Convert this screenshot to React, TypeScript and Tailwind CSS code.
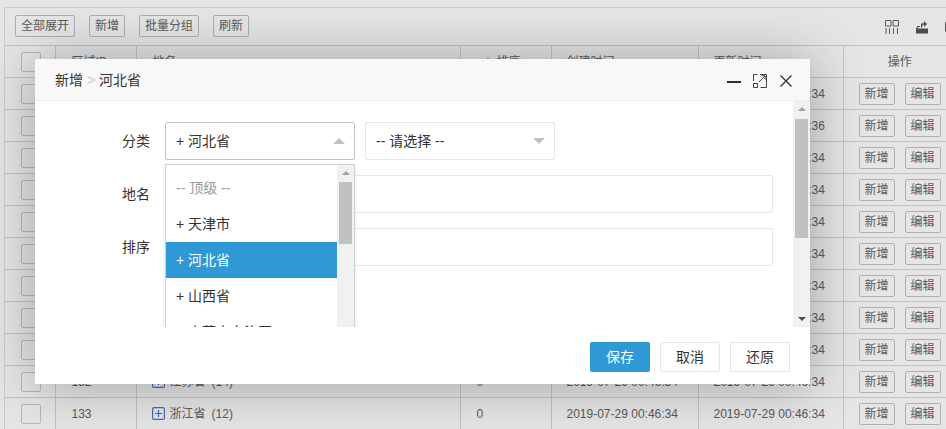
import React from "react";

const FONT = { fontFamily: '"Liberation Sans", "Noto Sans CJK SC", sans-serif' };

const rows = [
  ["110", "北京市", 16, "34"],
  ["120", "天津市", 16, "36"],
  ["130", "河北省", 11, "34"],
  ["140", "山西省", 11, "34"],
  ["150", "内蒙古自治区", 12, "34"],
  ["128", "辽宁省", 14, "34"],
  ["129", "吉林省", 9, "34"],
  ["130", "黑龙江省", 13, "34"],
  ["131", "上海市", 16, "34"],
  ["132", "江苏省", 14, "34"],
  ["133", "浙江省", 12, "34"],
] as const;

function SmallBtn({ children }: { children: React.ReactNode }) {
  return (
    <button className="flex h-[22px] items-center justify-center rounded-[2px] border border-[#c2c2c2] px-[5px] text-xs leading-none text-[#666]">
      {children}
    </button>
  );
}

function Check() {
  return <span className="block size-5 rounded-[2px] border border-[#ccc]" />;
}

function Tri({ up, cls }: { up?: boolean; cls: string }) {
  return (
    <svg viewBox="0 0 12 6" className={cls}>
      <path d={up ? "M6 0L12 6H0Z" : "M0 0H12L6 6Z"} fill="currentColor" />
    </svg>
  );
}

function Scrollbar({ thumbTop, thumbH, w, arrowDown }: { thumbTop: string; thumbH: string; w: string; arrowDown?: boolean }) {
  return (
    <div className={`relative h-full shrink-0 bg-[#f1f1f1] ${w}`}>
      <Tri up cls="absolute left-1/2 top-[6px] h-1 w-2 -translate-x-1/2 text-[#a3a3a3]" />
      <div className={`absolute left-[2px] right-[2px] bg-[#c1c1c1] ${thumbTop} ${thumbH}`} />
      {arrowDown && <Tri cls="absolute bottom-[6px] left-1/2 h-1 w-2 -translate-x-1/2 text-[#505050]" />}
    </div>
  );
}

export default function App() {
  return (
    <div className="relative h-[429px] w-[946px] overflow-hidden bg-white" style={FONT}>
      {/* Page behind the dialog */}
      <div className="ml-1 mt-[7px] w-[974px] border border-[#e2e2e2]">
        <div className="flex h-[37px] items-center gap-[14px] px-[10px] pb-[1px]">
          <SmallBtn>全部展开</SmallBtn>
          <SmallBtn>新增</SmallBtn>
          <SmallBtn>批量分组</SmallBtn>
          <SmallBtn>刷新</SmallBtn>
          <div className="ml-auto mr-2 mt-[2px] flex items-center gap-[16px] text-[#666]">
            <svg viewBox="0 0 14 14" className="size-[14px]" fill="none" stroke="currentColor">
              <path d="M.5.500h5.500v5.500h-5.500zM8 .500h5.500v5.500H8zM1 8v6M4.500 8v6M8.500 8v6M12.500 8v6" />
            </svg>
            <svg viewBox="0 0 14 14" className="size-[14px]" fill="#555">
              <path d="M1 8.500h12v5H1zM1 8.500l1.500-2.500h2.500v1H3.200L2.500 8.500zM6 7.500V4.800c0-1 .7-1.600 1.600-1.600H9V1l3 3-3 3V4.700H7.800c-.3 0-.5.200-.5.500v2.300z" />
            </svg>
            <svg viewBox="0 0 14 14" className="size-[14px]" fill="none" stroke="currentColor">
              <path d="M.5 2.500h8v9h-8z" />
            </svg>
          </div>
        </div>
        <table className="w-full table-fixed border-collapse text-xs text-[#666]">
          <colgroup>
            <col className="w-[50px]" />
            <col className="w-[81px]" />
            <col className="w-[324px]" />
            <col className="w-[91px]" />
            <col className="w-[147px]" />
            <col className="w-[145px]" />
            <col />
          </colgroup>
          <thead>
            <tr className="h-[32px] border-y border-[#d8d8d8] text-left font-normal">
              <th className="border-r border-[#d8d8d8] pl-[16px] font-normal"><Check /></th>
              <th className="border-r border-[#d8d8d8] pl-[16px] font-normal">区域ID</th>
              <th className="border-r border-[#d8d8d8] pl-[16px] font-normal">地名</th>
              <th className="border-r border-[#d8d8d8] pl-[24px] font-normal">
                <span className="flex items-center">
                  <span className="mr-[6px] block h-[6px] w-[6px] rotate-45 bg-[#e66]" />
                  排序
                  <Tri up cls="ml-[12px] h-[6px] w-[9px] text-[#aaa]" />
                </span>
              </th>
              <th className="border-r border-[#d8d8d8] pl-[15px] font-normal">创建时间</th>
              <th className="border-r border-[#d8d8d8] pl-[15px] font-normal">更新时间</th>
              <th className="pr-[21px] text-center font-normal">操作</th>
            </tr>
          </thead>
          <tbody>
            {rows.map(([id, name, n, end], i) => (
              <tr key={i} className="h-[32px] border-b border-[#d8d8d8]">
                <td className="border-r border-[#d8d8d8] pl-[16px]"><Check /></td>
                <td className="border-r border-[#d8d8d8] pl-[16px]">{id}</td>
                <td className="border-r border-[#d8d8d8] pl-[15px]">
                  <span className="flex items-center gap-[5px]">
                    <svg viewBox="0 0 13 13" className="size-[13px] text-[#4a78d4]" fill="none" stroke="currentColor" strokeWidth="1.200">
                      <rect x=".6" y=".6" width="11.800" height="11.800" rx="1.500" />
                      <path d="M6.500 3v7M3 6.500h7" />
                    </svg>
                    <span>{name}</span>
                    <span className="ml-[1px]">({n})</span>
                  </span>
                </td>
                <td className="border-r border-[#d8d8d8] pl-[16px]">0</td>
                <td className="border-r border-[#d8d8d8] pl-[15px]">2019-07-29 00:46:34</td>
                <td className="border-r border-[#d8d8d8] pl-[15px]">2019-07-29 00:46:{end}</td>
                <td className="pl-[15px]">
                  <span className="flex gap-[10px]">
                    <SmallBtn>新增</SmallBtn>
                    <SmallBtn>编辑</SmallBtn>
                  </span>
                </td>
              </tr>
            ))}
          </tbody>
        </table>
      </div>

      {/* Shade */}
      <div className="absolute inset-0 bg-black/10" />

      {/* Dialog */}
      <div className="absolute left-[35px] top-[59px] flex h-[325px] w-[775px] flex-col bg-white shadow-[1px_1px_50px_rgba(0,0,0,0.3)]">
        <div className="flex h-[42px] shrink-0 items-center border-b border-[#eee] bg-[#f8f8f8] pl-5 text-sm text-[#333]">
          <span>新增 <span className="text-[#ccc]">&gt;</span> 河北省</span>
          <div className="ml-auto flex items-center gap-[12px] pr-[18px] pt-[2px] text-[#2e2d3c]">
            <svg viewBox="0 0 14 2" className="mt-[2px] h-[2px] w-[14px]" fill="currentColor"><rect width="14" height="2" /></svg>
            <svg viewBox="0 0 14 14" className="mr-[1px] size-[14px]" fill="none" stroke="currentColor">
              <path d="M7 .5h6.500v13H7.500M.5 7V.5H4M.5 9.500h4v4h-4zM6 8l6-6M8.500 1.800h3.700v3.700" strokeWidth=".9" />
            </svg>
            <svg viewBox="0 0 12 12" className="size-[12px]" fill="none" stroke="currentColor" strokeWidth="1.300">
              <path d="M.5.5l11 11M11.500.5l-11 11" />
            </svg>
          </div>
        </div>

        <div className="relative flex h-[226px] shrink-0 overflow-hidden">
          <div className="flex min-w-0 flex-1 flex-col gap-[15px] pl-[130px] pr-5 pt-[21px] text-sm text-[#333]">
            <div className="relative flex gap-[10px]">
              <label className="absolute -left-[43px] top-0 leading-[38px]">分类</label>
              <div className="flex h-[38px] w-[190px] items-center justify-between rounded-[2px] border border-[#c2c2c2] pl-[10px] pr-[9px]">
                + 河北省
                <Tri up cls="h-[6px] w-3 text-[#c2c2c2]" />
              </div>
              <div className="flex h-[38px] w-[190px] items-center justify-between rounded-[2px] border border-[#e6e6e6] pl-[10px] pr-[9px]">
                -- 请选择 --
                <Tri cls="h-[6px] w-3 text-[#c2c2c2]" />
              </div>
            </div>
            <div className="relative">
              <label className="absolute -left-[43px] top-0 leading-[38px]">地名</label>
              <div className="h-[38px] rounded-[2px] border border-[#e6e6e6]" />
            </div>
            <div className="relative">
              <label className="absolute -left-[43px] top-0 leading-[38px]">排序</label>
              <div className="h-[38px] rounded-[2px] border border-[#e6e6e6]" />
            </div>
          </div>

          <Scrollbar w="w-[17px]" thumbTop="top-[18px]" thumbH="h-[119px]" arrowDown />

          {/* Open select list */}
          <div className="absolute left-[130px] top-[63px] flex h-[270px] w-[190px] border border-[#d2d2d2] bg-white text-sm shadow-[0_2px_4px_rgba(0,0,0,0.12)]">
            <div className="min-w-0 flex-1 pt-[5px] text-[#333]">
              <div className="h-9 pl-[10px] leading-9 text-[#999]">-- 顶级 --</div>
              <div className="h-9 pl-[10px] leading-9">+ 天津市</div>
              <div className="h-9 bg-[#2f99d6] pl-[10px] leading-9 text-white">+ 河北省</div>
              <div className="h-9 pl-[10px] leading-9">+ 山西省</div>
              <div className="h-9 pl-[10px] leading-9">+ 内蒙古自治区</div>
            </div>
            <Scrollbar w="w-[17px]" thumbTop="top-[17px]" thumbH="h-[62px]" />
          </div>
        </div>

        <div className="flex flex-1 items-start justify-end gap-[10px] pr-5 pt-[15px] text-sm">
          <button className="h-[30px] w-[60px] rounded-[2px] bg-[#2f99d6] text-white">保存</button>
          <button className="h-[30px] w-[60px] rounded-[2px] border border-[#e6e6e6] text-[#333]">取消</button>
          <button className="h-[30px] w-[60px] rounded-[2px] border border-[#e6e6e6] text-[#333]">还原</button>
        </div>
      </div>
    </div>
  );
}
